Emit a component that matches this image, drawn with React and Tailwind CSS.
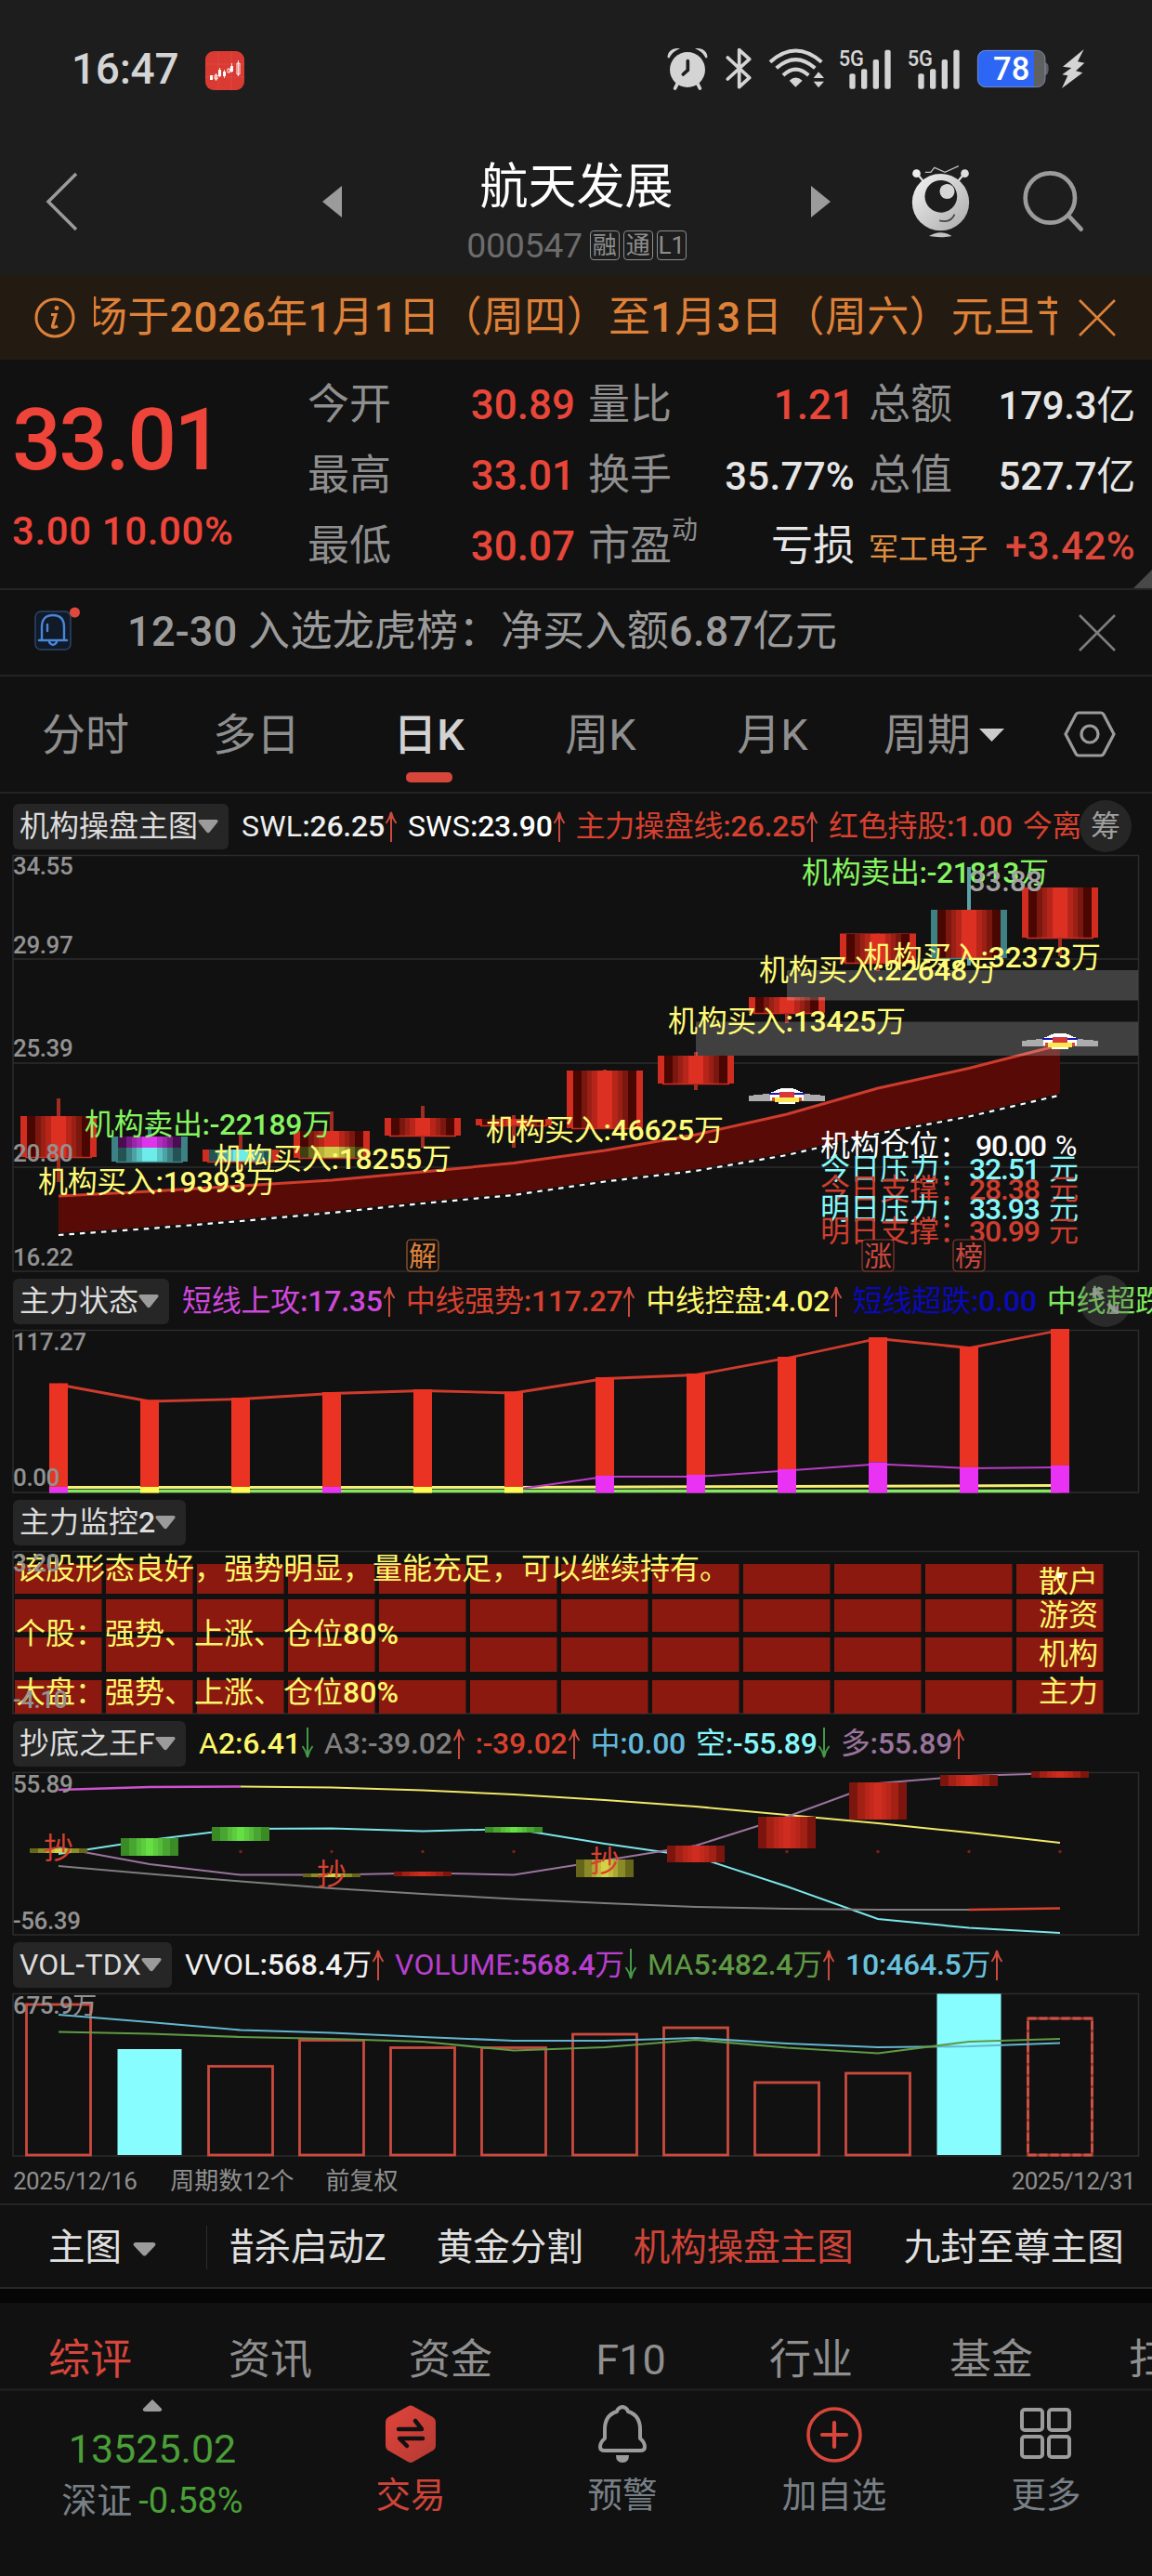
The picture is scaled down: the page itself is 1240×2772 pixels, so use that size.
import React from "react";
import clsx from "clsx";

const RED = "#d8402f";
const CENTERS = [63, 161, 259, 357, 455, 553, 651, 749, 847, 945, 1043, 1141];

// half widths measured from the candle centre, widest first
const CANDLE_STEPS = [34, 25, 19, 14, 8];
const CANDLE_COLORS = {
  red: ["#4a0601", "#7a1810", "#9a2016", "#b5251a", "#dc3022"],
  magenta: ["#4a0d52", "#7b1c86", "#9a25a6", "#b32bc2", "#dc35ea"],
  cyan: ["#255354", "#3c8284", "#4da3a4", "#5bc3c4", "#6eecec"],
  olive: ["#3f3f12", "#6d6a20", "#99942f", "#b5b03a", "#cfc94a"],
};

const SMALL_STEPS = [31, 22, 14, 9, 4];
const SMALL_COLORS = {
  red: ["#7c150d", "#a32015", "#b8261a", "#c3291c", "#cf2d1f"],
  green: ["#3a8a26", "#49a531", "#55bd39", "#5dcc3e", "#66df45"],
  olive: ["#66661a", "#8b8a28", "#a9a834", "#bfbd3c", "#d3d145"],
};

const candles = [
  { side: "#d02c20", wick: [1182, 1272], y: [1201, 1245], parts: [["red", 1201, 1246]] },
  { side: "#3c8285", wick: [1212, 1250], y: [1223, 1250], parts: [["magenta", 1223, 1235], ["cyan", 1235, 1250]] },
  { side: "#d02c20", wick: [1219, 1259], y: [1237, 1250], parts: [["cyan", 1237, 1250]] },
  { side: "#d02c20", wick: [1196, 1246], y: [1217, 1246], parts: [["red", 1217, 1234], ["olive", 1234, 1246]] },
  { side: "#d02c20", wick: [1190, 1235], y: [1203, 1222], parts: [["red", 1203, 1223]] },
  { side: "#d02c20", wick: [1200, 1235], y: [1204, 1211], parts: [["red", 1204, 1212]] },
  { side: "#d02c20", wick: [1151, 1214], y: [1152, 1214], parts: [["red", 1152, 1215]] },
  { side: "#d02c20", wick: [1132, 1173], y: [1136, 1166], parts: [["red", 1136, 1167]] },
  { side: "#d02c20", wick: [1073, 1101], y: [1073, 1090], parts: [["red", 1073, 1091]] },
  { side: "#d02c20", wick: [1004, 1045], y: [1004.5, 1036], parts: [["red", 1004.5, 1037]] },
  { side: "#3c8285", wick: [933, 1039], y: [979, 1031], parts: [["red", 979, 1031]] },
  { side: "#d02c20", wick: [955, 1029], y: [955, 1009], parts: [["red", 955, 1010]] },
];

const flowLabels = [
  { x: 91, y: 1221, fill: "#86f561", text: "机构卖出:-22189万" },
  { x: 41, y: 1283, fill: "#fffb78", text: "机构买入:19393万" },
  { x: 230, y: 1258, fill: "#fffb78", text: "机构买入:18255万" },
  { x: 523, y: 1227, fill: "#fffb78", text: "机构买入:46625万" },
  { x: 719, y: 1110, fill: "#fffb78", text: "机构买入:13425万" },
  { x: 817, y: 1055, fill: "#fffb78", text: "机构买入:22648万" },
  { x: 929, y: 1041, fill: "#fffb78", text: "机构买入:32373万" },
  { x: 863, y: 950, fill: "#86f561", text: "机构卖出:-21813万" },
];

const levels = [
  { y: 1244, fill: "#ffffff", name: "机构仓位：", value: "90.00", unit: "%", x: 1050 },
  { y: 1269, fill: "#86f7fa", name: "今日压力：", value: "32.51", unit: "元", x: 1043 },
  { y: 1291, fill: "#cf3d2e", name: "今日支撑：", value: "28.38", unit: "元", x: 1043 },
  { y: 1312, fill: "#86f7fa", name: "明日压力：", value: "33.93", unit: "元", x: 1043 },
  { y: 1336, fill: "#cf3d2e", name: "明日支撑：", value: "30.99", unit: "元", x: 1043 },
];

const forceBars = [
  [1488.5, 1600, "#ea32f5"],
  [1506.5, 1600, "#fdfa55"],
  [1504, 1600, "#fdfa55"],
  [1498, 1600, "#ea32f5"],
  [1495, 1600, "#fdfa55"],
  [1497.5, 1600, "#fdfa55"],
  [1482, 1588, "#ea32f5"],
  [1478, 1587, "#ea32f5"],
  [1460, 1581, "#ea32f5"],
  [1439, 1573.5, "#ea32f5"],
  [1449, 1579, "#ea32f5"],
  [1430, 1577, "#ea32f5"],
];

const monitorRows = [
  [1683, 32],
  [1721, 35],
  [1762, 37],
  [1808, 36],
];

const bottomBlocks = [
  ["olive", 1989, 1994],
  ["green", 1978, 1997],
  ["green", 1966, 1981],
  ["olive", 2016, 2020],
  ["red", 2014, 2019],
  ["green", 1966, 1972],
  ["olive", 2001, 2020],
  ["red", 1986, 2004],
  ["red", 1955, 1989],
  ["red", 1918, 1958],
  ["red", 1910, 1922],
  ["red", 1906, 1913],
];

const volumeTops = [2157, 2205, 2223.5, 2195.5, 2203.5, 2203.5, 2189, 2182, 2241, 2231, 2145.5, 2172];

const toPoints = (ys, start = 0) =>
  ys.map((y, i) => `${CENTERS[i + start]},${y}`).join(" ");

const Stripes = ({ cx, y1, y2, steps, colors }) => (
  <g shapeRendering="crispEdges">
    {steps.map((s, i) => (
      <rect key={s} x={cx - s} y={y1} width={s * 2} height={y2 - y1} fill={colors[i]} />
    ))}
  </g>
);

const AxisText = ({ y, children }) => (
  <text x="14" y={y} fontSize="26" letterSpacing="-.4" fill="#929292">
    {children}
  </text>
);

const Chart = ({ top, height, children }) => (
  <svg
    className="block w-full overflow-visible"
    width="1240"
    height={height}
    viewBox={`0 ${top} 1240 ${height}`}
  >
    <rect x="14" y={top + 0.5} width="1211.5" height={height - 1.5} fill="none" stroke="#2c2c2c" strokeWidth="1.5" />
    {children}
  </svg>
);

const Trend = ({ down }) => (
  <svg className="w-[14px] h-[34px] shrink-0" viewBox="0 0 14 34" fill="none">
    <path
      d={down ? "M7 0V31M1.5 20Q5.5 25 7 32Q8.500 25 12.500 20" : "M7 34V3M1.500 14Q5.500 9 7 2Q8.500 9 12.500 14"}
      stroke={down ? "#459a49" : "#cc4a3d"}
      strokeWidth="2"
    />
  </svg>
);

// latin letters are set lighter than the figures next to them
const Label = ({ text }) =>
  text.split(/([A-Z]+)/).map((part, i) =>
    i % 2 ? (
      <span key={i} className="tracking-[.2px] [font-family:Roboto]">
        {part}
      </span>
    ) : (
      part
    )
  );

const PanelHead = ({ name, items = [], className, children }) => (
  <div className={clsx("relative flex h-[62px] shrink-0 items-center pl-[14px]", className)}>
    <button
      type="button"
      className="flex h-[49px] shrink-0 items-center rounded-md bg-[#262626] pl-[7px] pr-[11px] text-[32px] leading-[49px] text-[#dcdcdc]"
    >
      <span className="whitespace-nowrap">
        <Label text={name} />
      </span>
      <svg className="w-[22px] h-[15px] shrink-0" viewBox="0 0 22 15">
        <path d="M2 0H20Q22.500 .5 21 3L13 13Q11 15.500 9 13L1 3Q-.5 .5 2 0Z" fill="#9b9b9b" />
      </svg>
    </button>
    <div className="ml-[14px] flex min-w-0 flex-1 items-center overflow-hidden whitespace-nowrap text-[32px] leading-[48px] tracking-[-.25px]">
      {items.map(([text, color, trend]) => (
        <div key={text} className="mr-[11px] flex shrink-0 items-center">
          <span style={{ color }}>
            <Label text={text} />
          </span>
          {trend && <Trend down={trend === "down"} />}
        </div>
      ))}
    </div>
    {children}
  </div>
);

const Close = ({ className }) => (
  <svg className={clsx("w-[40px] h-[40px] shrink-0", className)} viewBox="0 0 40 40" fill="none">
    <path d="M1 1L39 39M39 1L1 39" stroke="currentColor" strokeWidth="2.600" />
  </svg>
);

const Signal = () => (
  <svg className="w-[57px] h-[44px] overflow-visible" viewBox="607 34 171 132" fill="#d4d4d4">
    <text x="606" y="90" fontSize="74" fontWeight="700" textLength="82" lengthAdjust="spacingAndGlyphs">
      5G
    </text>
    <rect x="641" y="116" width="19" height="49" rx="6" />
    <rect x="679" y="101" width="19" height="64" rx="6" />
    <rect x="717" y="70" width="19" height="95" rx="6" />
    <rect x="755" y="39" width="19" height="126" rx="6" />
  </svg>
);

const StatusBar = () => (
  <div className="flex h-[120px] items-end pb-[23px] pl-[77px] pr-[72px]">
    <span className="text-[46px] leading-[46px] tracking-[-.3px] text-[#d4d4d4]">16:47</span>
    <svg className="ml-[29px] w-[42px] h-[42px]" viewBox="0 0 42 42">
      <rect width="42" height="42" rx="9" fill="#d93a32" />
      <path d="M0 14H42M0 28H42M14 0V42M28 0V42" stroke="#e25048" strokeWidth=".6" />
      <g fill="#fff">
        <path d="M5 26h3v5H5zM14 20h3v7h-3zM19 22h3v5h-3zM27 16h3v6h-3z" />
        <path d="M10 26h3v4h-3zM24 19h2.500v4H24zM34 13h3v12h-3z" fill="none" stroke="#fff" strokeWidth="1" />
        <path d="M11.500 24v8M15.500 18v10M20.500 20v9M28.500 13v10M35.500 10v17" stroke="#fff" strokeWidth=".8" />
      </g>
    </svg>
    <div className="ml-auto flex items-center">
      <svg className="w-[44px] h-[46px]" viewBox="50 34 132 138" fill="#d4d4d4">
        <circle cx="116" cy="106" r="57" />
        <path d="M52 68C50 48 68 34 92 38C76 44 66 52 58 68ZM180 68C182 48 164 34 140 38C156 44 166 52 174 68Z" />
        <path d="M84 150L76 166M148 150L156 166" stroke="#d4d4d4" strokeWidth="11" strokeLinecap="round" />
        <path d="M117 78V107L102 121" fill="none" stroke="#1d1d1d" strokeWidth="11" strokeLinecap="round" />
      </svg>
      <svg className="ml-[19px] w-[29px] h-[46px]" viewBox="240 34 87 138" fill="none">
        <path d="M247 67L317 132L284 162V42L317 72L247 136" stroke="#d4d4d4" strokeWidth="11" strokeLinejoin="round" strokeLinecap="round" />
      </svg>
      <svg className="ml-[17px] w-[62px] h-[46px]" viewBox="378 34 186 138" fill="none" stroke="#d4d4d4" strokeWidth="12">
        <path d="M384 81Q466 8 550 81M404 101Q466 46 529 101M426 124Q466 86 508 124" />
        <path d="M446 141Q466 122 488 141L466 162Z" fill="#d4d4d4" stroke="none" />
        <path d="M524 133L540 113L558 133ZM524 144H558L540 164Z" fill="#d4d4d4" stroke="none" />
      </svg>
      <div className="ml-[14px]">
        <Signal />
      </div>
      <div className="ml-[17px]">
        <Signal />
      </div>
      <svg className="ml-[17px] w-[79px] h-[46px]" viewBox="1056 36 237 138">
        <rect x="1060" y="46" width="218" height="118" rx="26" fill="#606060" />
        <path d="M1278 84Q1290 88 1289 104Q1290 122 1278 126Z" fill="#606060" />
        <path d="M1086 46H1242V164H1086Q1060 164 1060 138V72Q1060 46 1086 46Z" fill="#2d66f5" />
        <rect x="1060" y="46" width="218" height="118" rx="26" fill="none" stroke="#8fa5d8" strokeWidth="2" />
        <text x="1110" y="142" fontSize="104" fontWeight="500" fill="#fff" textLength="118" lengthAdjust="spacingAndGlyphs">
          78
        </text>
      </svg>
      <svg className="ml-[12px] w-[26px] h-[46px]" viewBox="1328 36 78 138">
        <path d="M1402 42L1334 98L1362 102L1332 124L1350 127L1331 168L1398 118L1376 112L1404 86L1382 82Z" fill="#d4d4d4" />
      </svg>
    </div>
  </div>
);

const Header = () => (
  <header className="flex h-[176px] items-start pl-[49px] pr-[71px]">
    <svg className="mt-[65px] w-[36px] h-[64px] shrink-0" viewBox="0 0 36 64" fill="none">
      <path d="M33 2L3 32L33 62" stroke="#9b9b9b" strokeWidth="3.500" />
    </svg>
    <svg className="ml-[262px] mt-[80px] w-[21px] h-[34px] shrink-0" viewBox="0 0 21 34">
      <path d="M21 0V34L0 17Z" fill="#9b9b9b" />
    </svg>
    <div className="flex w-[505px] flex-col items-center">
      <h1 className="mt-[54px] text-[52px] leading-[56px] text-white">航天发展</h1>
      <div className="mt-[16px] flex items-center gap-[4px] [font-family:Roboto,'Noto_Sans_CJK_SC',sans-serif]">
        <span className="mr-[4px] text-[37.500px] leading-[36px] tracking-[-.3px] text-[#6c6c6c]">000547</span>
        {["融", "通", "L1"].map((tag) => (
          <span
            key={tag}
            className="flex h-[32px] w-[32px] items-center justify-center rounded-[4px] border border-[#8d8d8d] text-[26px] leading-[30px] text-[#8d8d8d]"
          >
            {tag}
          </span>
        ))}
      </div>
    </div>
    <svg className="mt-[80px] w-[21px] h-[34px] shrink-0" viewBox="0 0 21 34">
      <path d="M0 0V34L21 17Z" fill="#9b9b9b" />
    </svg>
    <svg className="ml-auto mt-[57px] w-[67px] h-[80px] shrink-0" viewBox="60 50 200 240">
      <defs>
        <linearGradient id="bot" x1="0" y1="0" x2="1" y2="1">
          <stop offset="0" stopColor="#f4f4f4" />
          <stop offset="1" stopColor="#a9a9a9" />
        </linearGradient>
      </defs>
      <path d="M84 80L104 104M236 80L216 104" stroke="#e4e4e4" strokeWidth="6" />
      <circle cx="82" cy="79" r="13" fill="#eee" />
      <circle cx="238" cy="79" r="13" fill="#ddd" />
      <path d="M110 75H128L140 60L174 75L218 55" fill="none" stroke="#bdbdbd" strokeWidth="4" />
      <circle cx="160" cy="172" r="92" fill="url(#bot)" />
      <circle cx="161" cy="153" r="52" fill="#1d1d1d" />
      <circle cx="181" cy="137" r="24" fill="#d6d6d6" />
      <path d="M156 231Q194 240 205 211" fill="none" stroke="#444" strokeWidth="5" />
      <path d="M122 281Q160 258 196 281Q160 288 122 281Z" fill="#c4c4c4" />
    </svg>
    <svg className="ml-[53px] mt-[60px] w-[70px] h-[70px] shrink-0" viewBox="420 60 210 210" fill="none">
      <circle cx="514" cy="159" r="80" stroke="#9b9b9b" strokeWidth="14" />
      <path d="M573 216L614 260" stroke="#9b9b9b" strokeWidth="14" strokeLinecap="round" />
    </svg>
  </header>
);

const Notice = () => (
  <div className="flex h-[91px] items-center bg-[#231a12] pl-[37px] pr-[39px] text-[#de8139]">
    <svg className="w-[44px] h-[44px] shrink-0" viewBox="0 0 44 44" fill="none" stroke="currentColor">
      <circle cx="22" cy="22" r="20" strokeWidth="3" />
      <path d="M18 18.500H23L19.500 31Q19.500 33.500 25 31" strokeWidth="3.200" />
      <circle cx="24" cy="11.500" r="2.400" fill="currentColor" stroke="none" />
    </svg>
    <div className="ml-[20px] w-[1037px] overflow-hidden whitespace-nowrap text-[45px] leading-[60px] tracking-[.3px]">
      <span className="ml-[-9px]">场于2026年1月1日（周四）至1月3日（周六）元旦节</span>
    </div>
    <Close className="ml-auto" />
  </div>
);

const Stat = ({ label, sup, value, valueClass, className }) => (
  <div className={clsx("flex h-[76px] items-baseline justify-between leading-[76px]", className)}>
    <span className="text-[45px] text-[#8f8f8f]">
      {label}
      {sup && <span className="relative -top-[23px] text-[28px] leading-none">{sup}</span>}
    </span>
    <span className={valueClass}>{value}</span>
  </div>
);

const Quote = () => (
  <section className="relative flex h-[248px] border-b-2 border-[#242424] pt-[11px]">
    <div className="w-[331px] pl-[13px] text-[#ee4439]">
      <div className="mt-[26px] text-[93px] leading-[100px] tracking-[-2.500px]">33.01</div>
      <div className="mt-[23px] text-[42px] leading-[50px] tracking-[.6px] whitespace-nowrap">3.00 10.00%</div>
    </div>
    <div className="w-[288px]">
      <Stat label="今开" value="30.89" valueClass="text-[44px] text-[#e9463a]" />
      <Stat label="最高" value="33.01" valueClass="text-[44px] text-[#e9463a]" />
      <Stat label="最低" value="30.07" valueClass="text-[44px] text-[#e9463a]" />
    </div>
    <div className="ml-[14px] w-[287px]">
      <Stat label="量比" value="1.21" valueClass="text-[44px] text-[#e9463a]" />
      <Stat label="换手" value="35.77%" valueClass="text-[42px] tracking-[.3px] text-[#e6e6e6]" />
      <Stat label="市盈" sup="动" value="亏损" valueClass="text-[45px] text-[#e6e6e6]" />
    </div>
    <div className="ml-[15px] w-[287px]">
      <Stat label="总额" value="179.3亿" valueClass="text-[42px] text-[#e6e6e6] tracking-[-.3px]" />
      <Stat label="总值" value="527.7亿" valueClass="text-[42px] text-[#e6e6e6] tracking-[-.3px]" />
      <div className="flex h-[76px] items-baseline justify-between leading-[76px]">
        <span className="text-[32px] text-[#e08f40]">军工电子</span>
        <span className="text-[42px] tracking-[.4px] text-[#dd483b]">+3.42%</span>
      </div>
    </div>
    <svg className="absolute right-0 bottom-0 w-[20px] h-[20px]" viewBox="0 0 20 20">
      <path d="M20 0V20H0Z" fill="#484848" />
    </svg>
  </section>
);

const Alert = () => (
  <div className="flex h-[93px] items-center border-b-2 border-[#242424] pl-[37px] pr-[39px]">
    <svg className="mt-[-8px] w-[50px] h-[48px] shrink-0" viewBox="0 0 50 48" fill="none">
      <rect x="1" y="5" width="38" height="41" rx="6" fill="#101a28" stroke="#2c4468" strokeWidth="1.500" />
      <path d="M5 36H35M8 35V22Q8 9 20 9Q32 9 32 22V35M16 38Q20 44 24 38M14 19V26" stroke="#4a86d8" strokeWidth="2.400" strokeLinecap="round" />
      <circle cx="43.500" cy="6" r="5.500" fill="#e0483c" />
    </svg>
    <span className="ml-[50px] mt-[-1px] text-[45px] leading-[60px] tracking-[.3px] text-[#9b9b9b]">12-30 入选龙虎榜：净买入额6.87亿元</span>
    <Close className="ml-auto text-[#7d7d7d]" />
  </div>
);

const PeriodTabs = () => (
  <nav className="flex h-[126px] items-start border-b-2 border-[#242424] text-[47px] leading-[60px] text-[#8f8f8f] [font-family:Roboto,'Noto_Sans_CJK_SC',sans-serif]">
    <span className="mt-[33px] w-[184px] text-center">分时</span>
    <span className="mt-[33px] w-[184px] text-center">多日</span>
    <div className="mt-[33px] flex w-[187px] flex-col items-center">
      <span className="font-medium text-[#d2d2d2]">日K</span>
      <span className="mt-[10px] h-[11px] w-[50px] rounded-[5px] bg-[#d8463b]" />
    </div>
    <span className="mt-[33px] w-[183px] text-center">周K</span>
    <span className="mt-[33px] w-[187px] text-center">月K</span>
    <span className="mt-[33px] ml-[26px] flex items-center">
      周期
      <svg className="ml-[9px] w-[27px] h-[14px]" viewBox="0 0 27 14">
        <path d="M0 0H27L13.500 14Z" fill="#cccccc" />
      </svg>
    </span>
    <svg className="ml-[64px] mt-[37px] w-[56px] h-[50px]" viewBox="0 0 56 50" fill="none" stroke="#9b9b9b" strokeWidth="3.200">
      <path d="M16 2H40Q42 2 43 4L54 25L43 46Q42 48 40 48H16Q14 48 13 46L2 25L13 4Q14 2 16 2Z" />
      <circle cx="28" cy="25" r="9" />
    </svg>
  </nav>
);

const Saucer = ({ cx, y }) => (
  <g shapeRendering="crispEdges">
    <path d={`M${cx - 41} ${y + 8}L${cx - 10} ${y + 5}H${cx + 10}L${cx + 41} ${y + 8}V${y + 14}H${cx - 41}Z`} fill="#acacac" />
    <path d={`M${cx - 18} ${y + 5}L${cx - 6} ${y}H${cx + 6}L${cx + 18} ${y + 5}V${y + 13}H${cx - 18}Z`} fill="#fff" />
    <rect x={cx - 19} y={y + 5} width="38" height="2" fill="#1b1bb0" />
    <rect x={cx - 8} y={y + 4} width="16" height="6" fill="#d8383a" />
    <rect x={cx - 16} y={y + 10} width="32" height="4" fill="#d8492f" />
    <rect x={cx - 13} y={y + 10} width="26" height="5" fill="#fbe84e" />
    <rect x={cx - 9} y={y + 15} width="18" height="2" fill="#fff" />
  </g>
);

const upper = [1287, 1282, 1276, 1270, 1261, 1251.5, 1238, 1221, 1199, 1171, 1149.5, 1124.5];
const lower = [1329, 1322, 1314, 1305, 1295, 1286, 1271.5, 1260, 1243, 1220, 1201.5, 1178.5];

const MainChart = () => (
  <Chart top={920} height={449}>
    {[1032, 1144, 1256].map((y) => (
      <line key={y} x1="14" x2="1225" y1={y} y2={y} stroke="#2c2c2c" strokeWidth="1.500" />
    ))}
    <polygon
      points={`${toPoints(upper)} ${toPoints(lower.map((y) => y - 2)).split(" ").reverse().join(" ")}`}
      fill="#580b06"
    />
    {candles.map((c, i) => (
      <g key={CENTERS[i]}>
        <rect x={CENTERS[i] - 41} y={c.y[0]} width="82" height={c.y[1] - c.y[0]} fill={c.side} />
        {c.parts.map(([tone, y1, y2]) => (
          <Stripes key={tone} cx={CENTERS[i]} y1={y1} y2={y2} steps={CANDLE_STEPS} colors={CANDLE_COLORS[tone]} />
        ))}
        <line x1={CENTERS[i] - 36} x2={CENTERS[i] + 36} y1={c.y[1] + 0.5} y2={c.y[1] + 0.5} stroke={c.side} strokeWidth="1.500" />
        <path
          d={`M${CENTERS[i]} ${c.wick[0]}V${c.y[0]}M${CENTERS[i]} ${c.y[1]}V${c.wick[1]}`}
          stroke={i === 10 ? "#5aa3a8" : i === 1 ? "#3c8285" : "#a32c22"}
          strokeWidth="4"
        />
      </g>
    ))}
    <polyline points={toPoints(upper)} fill="none" stroke="#cf3b2d" strokeWidth="3" />
    <polyline points={toPoints(lower)} fill="none" stroke="#ffffff" strokeWidth="2.200" strokeDasharray="5.500 6" />
    <rect x="847" y="1044" width="378" height="32.500" fill="#fff" fillOpacity=".2" />
    <rect x="749" y="1099.500" width="476" height="36.500" fill="#fff" fillOpacity=".2" />
    <Saucer cx={847} y={1171} />
    <Saucer cx={1141} y={1112} />
    {flowLabels.map((l) => (
      <text key={l.text} x={l.x} y={l.y} fill={l.fill} fontSize="32" letterSpacing="-.35">
        {l.text}
      </text>
    ))}
    <text x="1043" y="959" fill="#a3a3a3" fontSize="31">33.88</text>
    {levels.map((l) => (
      <g key={l.y} fill={l.fill} fontSize="32">
        <text x="883" y={l.y}>{l.name}</text>
        <text x={l.x} y={l.y} textLength="77">{l.value}</text>
        <text x={l.unit === "%" ? 1136 : 1129} y={l.y} fontFamily="Roboto, 'Noto Sans CJK SC'">{l.unit}</text>
      </g>
    ))}
    {[
      [455, "解", "#e0823a"],
      [945, "涨", "#c9483d"],
      [1043, "榜", "#c9483d"],
    ].map(([x, t, color]) => (
      <g key={t}>
        <rect x={x - 17} y="1334" width="34" height="34" rx="4" fill="#111" stroke={color} strokeOpacity=".7" strokeWidth="1.200" />
        <text x={x} y="1361.500" textAnchor="middle" fontSize="30" fill={color}>{t}</text>
      </g>
    ))}
    <AxisText y={941}>34.55</AxisText>
    <AxisText y={1026}>29.97</AxisText>
    <AxisText y={1137}>25.39</AxisText>
    <AxisText y={1250}>20.80</AxisText>
    <AxisText y={1362}>16.22</AxisText>
  </Chart>
);

const ForceChart = () => (
  <Chart top={1431} height={176}>
    <polyline points={toPoints(forceBars.map((b) => b[0] + 1.5))} fill="none" stroke="#cf3b2d" strokeWidth="2.800" />
    <line x1="53" x2="1141" y1="1604.500" y2="1604.500" stroke="#86e560" strokeWidth="3.500" />
    <polyline points="53,1600.500 553,1600.500 1141,1598.500" fill="none" stroke="#f6ef74" strokeWidth="3" />
    <polyline points="553,1603 651,1589 749,1589 847,1582.500 945,1575.500 1043,1580 1141,1579" fill="none" stroke="#b83cc4" strokeWidth="2" />
    {forceBars.map(([y, split, color], i) => (
      <g key={CENTERS[i]}>
        <rect x={CENTERS[i] - 10} y={y} width="20" height={split - y} fill="#ea3323" />
        <rect x={CENTERS[i] - 10} y={split} width="20" height={1606.5 - split} fill={color} />
      </g>
    ))}
    <AxisText y={1453}>117.27</AxisText>
    <AxisText y={1599}>0.00</AxisText>
  </Chart>
);

const MonitorChart = () => (
  <Chart top={1669} height={176}>
    {monitorRows.map(([y, h]) =>
      CENTERS.map((cx) => (
        <rect key={`${cx}-${y}`} x={cx - 47} y={y} width="93.500" height={h} fill="#8b190f" />
      ))
    )}
    <g fill="#fdf76c" fontSize="32">
      <text x="17" y="1699">该股形态良好，强势明显，量能充足，可以继续持有。</text>
      <text x="17" y="1769">个股：强势、上涨、仓位80%</text>
      <text x="17" y="1832">大盘：强势、上涨、仓位80%</text>
      <text x="1118" y="1713">散户</text>
      <text x="1118" y="1749">游资</text>
      <text x="1118" y="1791">机构</text>
      <text x="1118" y="1831">主力</text>
    </g>
    <rect x="1138" y="1693" width="5" height="5" fill="#fff" />
    <AxisText y={1691}>3.20</AxisText>
    <AxisText y={1838}>-4.10</AxisText>
  </Chart>
);

const BottomChart = () => (
  <Chart top={1907} height={176}>
    <g fill="none" strokeWidth="2">
      <polyline points={toPoints([1926, 1923, 1922.500])} stroke="#cf52d0" strokeWidth="2.500" />
      <polyline points={toPoints([1922.5, 1923.5, 1926.5, 1931, 1937, 1944, 1953, 1962, 1972, 1983], 2)} stroke="#efe86a" />
      <polyline points={toPoints([1995, 1980, 1968, 1967.5, 1970.5, 1968, 1984, 1998, 2030, 2065, 2074.5, 2080])} stroke="#7be6ea" />
      <polyline points={toPoints([1988, 2006, 2017.5, 2017.5, 2015.5, 2017.5, 2002, 1986, 1955, 1919, 1911, 1908])} stroke="#9a749d" />
      <polyline points={toPoints([2008, 2016.5, 2024.5, 2032, 2038, 2043.5, 2048, 2052, 2054, 2055, 2055])} stroke="#7d7d7d" />
      <polyline points={toPoints([2055, 2053.5], 10)} stroke={RED} strokeWidth="2.500" />
    </g>
    {[2, 3, 4, 5, 8, 9, 10, 11].map((i) => (
      <circle key={i} cx={CENTERS[i]} cy="1992.500" r="1.700" fill="#7e2018" />
    ))}
    {bottomBlocks.map(([tone, y1, y2], i) => (
      <Stripes key={CENTERS[i]} cx={CENTERS[i]} y1={y1} y2={y2} steps={SMALL_STEPS} colors={SMALL_COLORS[tone]} />
    ))}
    <g fill={RED} fontSize="32" textAnchor="middle">
      <text x="63" y="2000">抄</text>
      <text x="357" y="2028">抄</text>
      <text x="651" y="2014">抄</text>
    </g>
    <AxisText y={1929}>55.89</AxisText>
    <AxisText y={2076}>-56.39</AxisText>
  </Chart>
);

const VolumeChart = () => (
  <Chart top={2145} height={176}>
    {volumeTops.map((y, i) =>
      i === 1 || i === 10 ? (
        <rect key={CENTERS[i]} x={CENTERS[i] - 34.5} y={y} width="69" height={2319 - y} fill="#87fdff" />
      ) : (
        <g key={CENTERS[i]} fill="none">
          <rect
            x={CENTERS[i] - 34.5}
            y={y}
            width="69"
            height={2319 - y}
            stroke={i === 11 ? "#a03a32" : "#cb4a3f"}
            strokeWidth="2.800"
          />
          {i === 11 && (
            <rect
              x={CENTERS[i] - 34.5}
              y={y}
              width="69"
              height={2319 - y}
              stroke="#cf5146"
              strokeWidth="2.800"
              strokeDasharray="9 3"
            />
          )}
        </g>
      )
    )}
    <polyline
      points={toPoints([2168, 2176, 2184.5, 2187.5, 2192, 2196, 2196, 2193, 2199, 2203, 2202, 2198.5])}
      fill="none"
      stroke="#63b6cf"
      strokeWidth="2.200"
    />
    <polyline
      points={toPoints([2186.5, 2188.5, 2192, 2194, 2197, 2206.5, 2203, 2195, 2203.5, 2209.5, 2197, 2194])}
      fill="none"
      stroke="#5f9a45"
      strokeWidth="2.200"
    />
    <AxisText y={2167}>675.9万</AxisText>
  </Chart>
);

const StrategyBar = () => (
  <div className="flex h-[90px] items-center border-b-2 border-[#282828] pt-[3px] text-[39.500px] leading-[60px] whitespace-nowrap text-[#e0e0e0] [font-family:Roboto,'Noto_Sans_CJK_SC',sans-serif]">
    <span className="ml-[52px] flex items-center">
      主图
      <svg className="ml-[12px] mt-[4px] w-[25px] h-[15px]" viewBox="0 0 25 15">
        <path d="M3 0H22Q26 1 23.500 4L15 13Q12.500 16 10 13L1.500 4Q-1 1 3 0Z" fill="#9b9b9b" />
      </svg>
    </span>
    <span className="ml-[54px] h-[47px] w-px shrink-0 bg-[#2e2e2e]" />
    <div className="ml-[25px] flex flex-1 gap-[54px] overflow-hidden">
      <span className="ml-[-14px]">惜杀启动Z</span>
      <span>黄金分割</span>
      <span className="text-[#cf4438]">机构操盘主图</span>
      <span>九封至尊主图</span>
    </div>
  </div>
);

const InfoTabs = () => (
  <div className="flex h-[95px] overflow-hidden border-b-[3px] border-[#1d1d1d] text-[45px] leading-[60px] text-[#8f8f8f] [font-family:Roboto,'Noto_Sans_CJK_SC',sans-serif]">
    {["综评", "资讯", "资金", "F10", "行业", "基金"].map((tab, i) => (
      <span key={tab} className={clsx("mt-[32px] w-[194px] shrink-0 text-center", i === 0 && "text-[#d8463b]")}>
        {tab}
      </span>
    ))}
    <span className="ml-[51px] mt-[32px] shrink-0">扫</span>
  </div>
);

const NavItem = ({ label, active, children }) => (
  <div className="flex flex-1 flex-col items-center pt-[13px]">
    <svg className="w-[66px] h-[66px]" viewBox="0 0 66 66" fill="none">
      {children}
    </svg>
    <span className={clsx("mt-[8px] text-[37.500px] leading-[50px]", active ? "text-[#cf4438]" : "text-[#788087]")}>{label}</span>
  </div>
);

const BottomNav = () => (
  <nav className="flex h-[199px] [font-family:Roboto,'Noto_Sans_CJK_SC',sans-serif]">
    <div className="flex w-[328px] flex-col items-center pt-[9px]">
      <svg className="w-[22px] h-[13px]" viewBox="0 0 22 13">
        <path d="M11 0L21 10Q22 13 18 13H4Q0 13 1 10Z" fill="#9b9b9b" />
      </svg>
      <span className="mt-[15px] text-[43px] leading-[50px] text-[#4a9f38]">13525.02</span>
      <span className="mt-[6px] text-[38px] leading-[50px] text-[#4a9f38]">
        <span className="text-[#788087]">深证</span>
        <span className="ml-[7px]">-0.58%</span>
      </span>
    </div>
    <NavItem label="交易" active>
      <defs>
        <linearGradient id="trade" x1="0" y1="0" x2="1" y2="1">
          <stop offset="0" stopColor="#e2443b" />
          <stop offset="1" stopColor="#b23a32" />
        </linearGradient>
      </defs>
      <path d="M30 3.500Q33 1.500 36 3.500L57 15Q60 17 60 21V45Q60 49 57 51L36 63Q33 65 30 63L9 51Q6 49 6 45V21Q6 17 9 15Z" fill="url(#trade)" />
      <path d="M20 28H45L38 19M46 38H21L29 46" stroke="#111" strokeWidth="4.500" strokeLinecap="round" strokeLinejoin="round" />
    </NavItem>
    <NavItem label="预警">
      <path
        d="M33 4Q28 5 27 9Q14 13 14 28V38Q9 42 9 47Q9 51 14 51H52Q57 51 57 47Q57 42 52 38V28Q52 13 39 9Q38 5 33 4Z"
        stroke="#9b9b9b"
        strokeWidth="4"
        strokeLinejoin="round"
      />
      <path d="M26 56H40Q40 64 33 64Q26 64 26 56Z" fill="#9b9b9b" />
    </NavItem>
    <NavItem label="加自选">
      <circle cx="33" cy="34" r="28" stroke="#d8463b" strokeWidth="3.600" />
      <path d="M20 34H46M33 21V47" stroke="#d8463b" strokeWidth="4.200" strokeLinecap="round" />
    </NavItem>
    <NavItem label="更多">
      <g stroke="#9b9b9b" strokeWidth="4">
        <rect x="7" y="7" width="22" height="22" rx="3" />
        <rect x="36" y="7" width="22" height="22" rx="3" />
        <rect x="7" y="36" width="22" height="22" rx="3" />
        <rect x="36" y="36" width="22" height="22" rx="3" />
      </g>
    </NavItem>
  </nav>
);

const App = () => {
  return (
    <div className="flex h-[2772px] w-[1240px] flex-col overflow-hidden bg-[#111111] [font-family:'Roboto_Medium',Roboto,'Noto_Sans_CJK_SC',sans-serif]">
      <div className="bg-[#1d1d1d]">
        <StatusBar />
        <Header />
      </div>
      <Notice />
      <Quote />
      <Alert />
      <PeriodTabs />

      <PanelHead
        className="h-[66px] pt-1 pr-[78px]"
        name="机构操盘主图"
        items={[
          ["SWL:26.25", "#eeeeee", "up"],
          ["SWS:23.90", "#ffffff", "up"],
          ["主力操盘线:26.25", RED, "up"],
          ["红色持股:1.00", RED],
          ["今离", RED],
        ]}
      >
        <span className="absolute right-[22px] top-[7px] flex h-[56px] w-[56px] items-center justify-center rounded-full bg-[#262626] text-[32px] leading-[56px] text-[#a0a0a0]">
          筹
        </span>
      </PanelHead>
      <MainChart />

      <PanelHead
        name="主力状态"
        items={[
          ["短线上攻:17.35", "#cf48dc", "up"],
          ["中线强势:117.27", RED, "up"],
          ["中线控盘:4.02", "#fdf76c", "up"],
          ["短线超跌:0.00", "#0a0ab8"],
          ["中线超跌", "#7ee85e"],
        ]}
      >
        <svg className="absolute right-[22px] top-[3px] w-[56px] h-[56px]" viewBox="0 0 56 56" fill="#9b9b9b">
          <circle cx="28" cy="28" r="28" fill="#5a5a5a" fillOpacity=".35" />
          <path d="M14 14H25L21 18L26 24L23 27L18 21L14 26ZM42 42H31L35 38L29 32L32 29L38 35L42 30Z" fillOpacity=".85" />
        </svg>
      </PanelHead>
      <ForceChart />

      <PanelHead name="主力监控2" />
      <MonitorChart />

      <PanelHead
        name="抄底之王F"
        items={[
          ["A2:6.41", "#fdf76c", "down"],
          ["A3:-39.02", "#808080", "up"],
          [":-39.02", RED, "up"],
          ["中:0.00", "#63b9dc"],
          ["空:-55.89", "#86f7fa", "down"],
          ["多:55.89", "#9a749d", "up"],
        ]}
      />
      <BottomChart />

      <PanelHead
        name="VOL-TDX"
        items={[
          ["VVOL:568.4万", "#f2f2f2", "up"],
          ["VOLUME:568.4万", "#b93fce", "down"],
          ["MA5:482.4万", "#5f9a45", "up"],
          ["10:464.5万", "#69c2de", "up"],
        ]}
      />
      <VolumeChart />

      <div className="flex h-[52px] items-center border-b-2 border-[#242424] pt-[2px] pl-[14px] pr-[18px] text-[26px] leading-[40px] text-[#8f8f8f] [font-family:Roboto,'Noto_Sans_CJK_SC',sans-serif]">
        <span className="tracking-[-.5px]">2025/12/16</span>
        <span className="ml-[36px]">周期数12个</span>
        <span className="ml-[34px]">前复权</span>
        <span className="ml-auto tracking-[-.5px]">2025/12/31</span>
      </div>

      <StrategyBar />
      <div className="h-[15px] shrink-0 bg-[#060606]" />
      <InfoTabs />
      <BottomNav />
    </div>
  );
};

export default App;
